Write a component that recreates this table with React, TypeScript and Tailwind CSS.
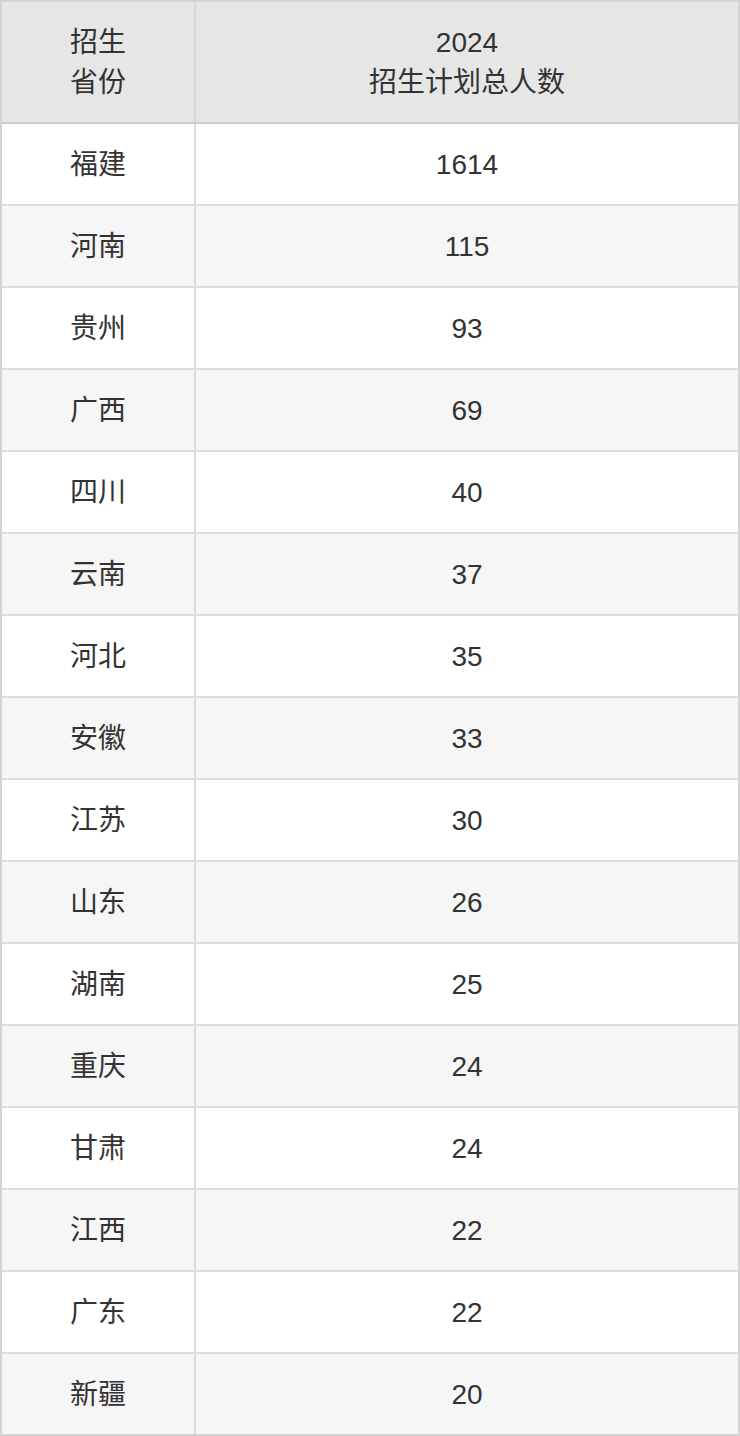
const rows: Array<[string, number]> = [
  ["福建", 1614],
  ["河南", 115],
  ["贵州", 93],
  ["广西", 69],
  ["四川", 40],
  ["云南", 37],
  ["河北", 35],
  ["安徽", 33],
  ["江苏", 30],
  ["山东", 26],
  ["湖南", 25],
  ["重庆", 24],
  ["甘肃", 24],
  ["江西", 22],
  ["广东", 22],
  ["新疆", 20],
];

const App = () => {
  return (
    <div className="w-[740px] bg-white font-['Liberation_Sans','Noto_Sans_CJK_SC',sans-serif] text-[28px] leading-[40px] text-[#333333]">
      <div className="border-2 border-[#d3d3d3]">
        <div className="grid grid-cols-[194px_1fr] bg-[#e6e6e6] border-b-2 border-[#cccccc]">
          <div className="h-[120px] pt-[1px] flex flex-col items-center justify-center border-r-2 border-[#d6d6d6]">
            <span>招生</span>
            <span>省份</span>
          </div>
          <div className="h-[120px] pt-[1px] flex flex-col items-center justify-center">
            <span>2024</span>
            <span>招生计划总人数</span>
          </div>
        </div>
        {rows.map((row, index) => (
          <div
            key={index}
            className={
              index % 2 === 0
                ? "grid grid-cols-[194px_1fr] bg-white border-[#dddddd] " +
                  (index > 0 ? "border-t-2" : "")
                : "grid grid-cols-[194px_1fr] bg-[#f6f6f6] border-t-2 border-[#dddddd]"
            }
          >
            <div className="h-[80px] pt-[1px] flex items-center justify-center border-r-2 border-[#dddddd]">
              {row[0]}
            </div>
            <div className="h-[80px] pt-[1px] flex items-center justify-center">
              {row[1]}
            </div>
          </div>
        ))}
      </div>
    </div>
  );
};

export default App;
